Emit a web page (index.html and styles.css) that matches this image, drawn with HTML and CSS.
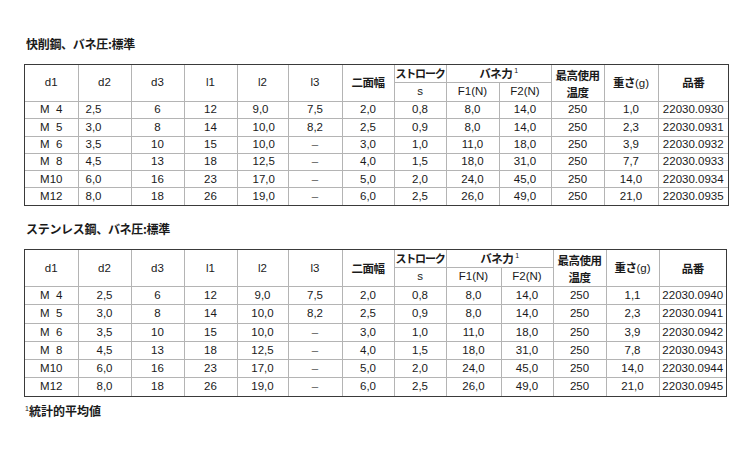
FILE: index.html
```html
<!DOCTYPE html>
<html lang="ja">
<head>
<meta charset="utf-8">
<link rel="stylesheet" href="styles.css">
</head>
<body>
<div class="page">
  <div class="title t1">快削鋼、バネ圧:標準</div>
  <div class="wrap">
    <table class="spec spec1">
      <colgroup>
        <col class="c53"><col class="c53"><col class="c53"><col class="c53"><col class="c51"><col class="c54"><col class="c52"><col class="c52"><col class="c53"><col class="c52"><col class="c53"><col class="c54"><col class="c70">
      </colgroup>
      <thead>
        <tr class="h1">
          <th rowspan="2">d1</th>
          <th rowspan="2">d2</th>
          <th rowspan="2">d3</th>
          <th rowspan="2">l1</th>
          <th rowspan="2">l2</th>
          <th rowspan="2">l3</th>
          <th rowspan="2" class="jp">二面幅</th>
          <th class="jp stroke">ストローク</th>
          <th colspan="2" class="jp">バネ力<sup>1</sup></th>
          <th rowspan="2" class="jp two"><span class="l1">最高使用</span><span class="l2">温度</span></th>
          <th rowspan="2" class="jp">重さ<span class="lat">(g)</span></th>
          <th rowspan="2" class="jp">品番</th>
        </tr>
        <tr class="h2">
          <th>s</th>
          <th>F1(N)</th>
          <th>F2(N)</th>
        </tr>
      </thead>
      <tbody>
        <tr><td>M&nbsp;&nbsp;4</td><td class="left6">2,5</td><td>6</td><td>12</td><td class="left16">9,0</td><td>7,5</td><td>2,0</td><td>0,8</td><td>8,0</td><td>14,0</td><td>250</td><td>1,0</td><td>22030.0930</td></tr>
        <tr><td>M&nbsp;&nbsp;5</td><td class="left6">3,0</td><td>8</td><td>14</td><td class="left16">10,0</td><td>8,2</td><td>2,5</td><td>0,9</td><td>8,0</td><td>14,0</td><td>250</td><td>2,3</td><td>22030.0931</td></tr>
        <tr><td>M&nbsp;&nbsp;6</td><td class="left6">3,5</td><td>10</td><td>15</td><td class="left16">10,0</td><td class="dash">–</td><td>3,0</td><td>1,0</td><td>11,0</td><td>18,0</td><td>250</td><td>3,9</td><td>22030.0932</td></tr>
        <tr><td>M&nbsp;&nbsp;8</td><td class="left6">4,5</td><td>13</td><td>18</td><td class="left16">12,5</td><td class="dash">–</td><td>4,0</td><td>1,5</td><td>18,0</td><td>31,0</td><td>250</td><td>7,7</td><td>22030.0933</td></tr>
        <tr><td>M10</td><td class="left6">6,0</td><td>16</td><td>23</td><td class="left16">17,0</td><td class="dash">–</td><td>5,0</td><td>2,0</td><td>24,0</td><td>45,0</td><td>250</td><td>14,0</td><td>22030.0934</td></tr>
        <tr><td>M12</td><td class="left6">8,0</td><td>18</td><td>26</td><td class="left16">19,0</td><td class="dash">–</td><td>6,0</td><td>2,5</td><td>26,0</td><td>49,0</td><td>250</td><td>21,0</td><td>22030.0935</td></tr>
      </tbody>
    </table>
  </div>

  <div class="title t2">ステンレス鋼、バネ圧:標準</div>
  <div class="wrap">
    <table class="spec spec2">
      <colgroup>
        <col class="c53"><col class="c53"><col class="c53"><col class="c53"><col class="c51"><col class="c54"><col class="c52"><col class="c52"><col class="c55"><col class="c52"><col class="c53"><col class="c53"><col class="c67">
      </colgroup>
      <thead>
        <tr class="h1">
          <th rowspan="2">d1</th>
          <th rowspan="2">d2</th>
          <th rowspan="2">d3</th>
          <th rowspan="2">l1</th>
          <th rowspan="2">l2</th>
          <th rowspan="2">l3</th>
          <th rowspan="2" class="jp">二面幅</th>
          <th class="jp stroke">ストローク</th>
          <th colspan="2" class="jp">バネ力<sup>1</sup></th>
          <th rowspan="2" class="jp two"><span class="l1">最高使用</span><span class="l2">温度</span></th>
          <th rowspan="2" class="jp">重さ<span class="lat">(g)</span></th>
          <th rowspan="2" class="jp">品番</th>
        </tr>
        <tr class="h2">
          <th>s</th>
          <th>F1(N)</th>
          <th>F2(N)</th>
        </tr>
      </thead>
      <tbody>
        <tr><td>M&nbsp;&nbsp;4</td><td>2,5</td><td>6</td><td>12</td><td>9,0</td><td>7,5</td><td>2,0</td><td>0,8</td><td>8,0</td><td>14,0</td><td>250</td><td>1,1</td><td>22030.0940</td></tr>
        <tr><td>M&nbsp;&nbsp;5</td><td>3,0</td><td>8</td><td>14</td><td>10,0</td><td>8,2</td><td>2,5</td><td>0,9</td><td>8,0</td><td>14,0</td><td>250</td><td>2,3</td><td>22030.0941</td></tr>
        <tr><td>M&nbsp;&nbsp;6</td><td>3,5</td><td>10</td><td>15</td><td>10,0</td><td class="dash">–</td><td>3,0</td><td>1,0</td><td>11,0</td><td>18,0</td><td>250</td><td>3,9</td><td>22030.0942</td></tr>
        <tr><td>M&nbsp;&nbsp;8</td><td>4,5</td><td>13</td><td>18</td><td>12,5</td><td class="dash">–</td><td>4,0</td><td>1,5</td><td>18,0</td><td>31,0</td><td>250</td><td>7,8</td><td>22030.0943</td></tr>
        <tr><td>M10</td><td>6,0</td><td>16</td><td>23</td><td>17,0</td><td class="dash">–</td><td>5,0</td><td>2,0</td><td>24,0</td><td>45,0</td><td>250</td><td>14,0</td><td>22030.0944</td></tr>
        <tr><td>M12</td><td>8,0</td><td>18</td><td>26</td><td>19,0</td><td class="dash">–</td><td>6,0</td><td>2,5</td><td>26,0</td><td>49,0</td><td>250</td><td>21,0</td><td>22030.0945</td></tr>
      </tbody>
    </table>
  </div>

  <div class="note"><sup>1</sup>統計的平均値</div>
</div>
</body>
</html>
```

FILE: styles.css
```css
html, body {
  margin: 0;
  padding: 0;
  background: #ffffff;
}

body {
  font-family: "Liberation Sans", Arial, "Noto Sans CJK JP", sans-serif;
  color: #1a1a1a;
  width: 750px;
  height: 450px;
  overflow: hidden;
}

.page {
  padding: 36px 0 0 24px;
  display: flex;
  flex-direction: column;
  align-items: flex-start;
}

.title {
  font-family: "Noto Sans CJK JP", sans-serif;
  font-weight: bold;
  font-size: 12px;
  line-height: 16px;
  height: 16px;
  padding-left: 2px;
  letter-spacing: -0.3px;
}

.t1 { margin-bottom: 12px; }
.t2 { margin-top: 15px; margin-bottom: 12px; }

.wrap {
  border: 1px solid #3a3a3a;
}

.spec {
  border-collapse: collapse;
  border-style: hidden;
  table-layout: fixed;
  width: 701px;
  font-size: 11.5px;
}

.c51 { width: 51px; }
.c52 { width: 52px; }
.c53 { width: 53px; }
.c54 { width: 54px; }
.c55 { width: 55px; }
.c67 { width: 67px; }
.c70 { width: 70px; }

.spec th,
.spec td {
  border: 1px solid #b4b4b4;
  padding: 0;
  text-align: center;
  vertical-align: middle;
  font-weight: normal;
  line-height: 1;
  white-space: nowrap;
  overflow: hidden;
}

.spec th.jp {
  font-family: "Noto Sans CJK JP", sans-serif;
  font-weight: bold;
  font-size: 11.5px;
  letter-spacing: -0.5px;
}

.spec th.stroke {
  font-size: 11px;
  letter-spacing: -1.2px;
  text-align: left;
  padding-left: 1px;
}

.spec th .lat {
  font-family: "Liberation Sans", Arial, sans-serif;
  font-weight: normal;
  letter-spacing: 0;
}

.spec sup {
  font-family: "Liberation Sans", Arial, sans-serif;
  font-weight: normal;
  font-size: 7px;
  vertical-align: 5px;
  line-height: 0;
  margin-left: 2px;
}

.spec th.two {
  vertical-align: top;
  padding-top: 2px;
}

.spec th.two span {
  display: block;
  line-height: 17px;
}

.spec1 .h1 { height: 17px; }
.spec1 .h2 { height: 18px; }
.spec1 tbody tr { height: 17.3px; }

.spec2 .h1 { height: 17px; }
.spec2 .h2 { height: 19px; }
.spec2 tbody tr { height: 18.2px; }

.spec .left6 {
  text-align: left;
  padding-left: 7px;
}

.spec .left16 {
  text-align: left;
  padding-left: 15px;
}

.spec .dash {
  color: #555;
}

.note {
  margin-top: 6px;
  font-family: "Noto Sans CJK JP", sans-serif;
  font-weight: bold;
  font-size: 12px;
  line-height: 16px;
  padding-left: 1px;
}

.note sup {
  font-family: "Liberation Sans", Arial, sans-serif;
  font-weight: normal;
  font-size: 7px;
  vertical-align: 5px;
  line-height: 0;
}
```
